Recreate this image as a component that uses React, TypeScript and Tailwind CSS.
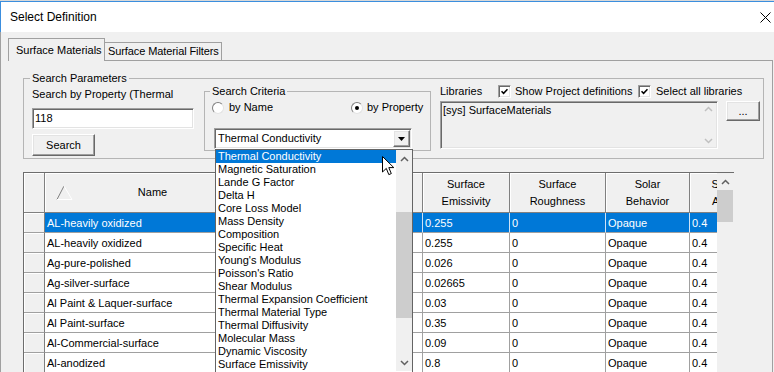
import React from 'react'

const propertyItems: string[] = [
  'Thermal Conductivity',
  'Magnetic Saturation',
  'Lande G Factor',
  'Delta H',
  'Core Loss Model',
  'Mass Density',
  'Composition',
  'Specific Heat',
  "Young's Modulus",
  "Poisson's Ratio",
  'Shear Modulus',
  'Thermal Expansion Coefficient',
  'Thermal Material Type',
  'Thermal Diffusivity',
  'Molecular Mass',
  'Dynamic Viscosity',
  'Surface Emissivity',
]

const materials: [string, string][] = [
  ['AL-heavily oxidized', '0.255'],
  ['AL-heavily oxidized', '0.255'],
  ['Ag-pure-polished', '0.026'],
  ['Ag-silver-surface', '0.02665'],
  ['Al Paint & Laquer-surface', '0.03'],
  ['Al Paint-surface', '0.35'],
  ['Al-Commercial-surface', '0.09'],
  ['Al-anodized', '0.8'],
]

const sunken =
  'border border-t-[#a0a0a0] border-l-[#a0a0a0] border-b-white border-r-white shadow-[inset_1px_1px_0_#696969,inset_-1px_-1px_0_#e3e3e3]'
const raised =
  'border border-t-white border-l-white border-b-[#696969] border-r-[#696969] shadow-[inset_-1px_-1px_0_#a0a0a0,inset_1px_1px_0_#e3e3e3] bg-[#f0f0f0]'

const Chevron: React.FC<{ up?: boolean; color?: string }> = ({ up, color = '#606060' }) => (
  <svg width="9" height="6" viewBox="0 0 9 6">
    <path
      d={up ? 'M1 5 L4.5 1.5 L8 5' : 'M1 1 L4.5 4.5 L8 1'}
      fill="none"
      stroke={color}
      strokeWidth="1.5"
    />
  </svg>
)

const CheckBox: React.FC = () => (
  <span className={`w-[13px] h-[13px] shrink-0 bg-white flex items-center justify-center ${sunken}`}>
    <svg width="7" height="7" viewBox="0 0 7 7">
      <path d="M0.5 3.2 L2.6 5.3 L6.5 1.2" fill="none" stroke="#000" strokeWidth="1.6" />
    </svg>
  </span>
)

const Radio: React.FC<{ checked?: boolean }> = ({ checked }) => (
  <span className="w-[12px] h-[12px] shrink-0 rounded-full bg-white border border-t-[#808080] border-l-[#808080] border-b-[#e3e3e3] border-r-[#e3e3e3] flex items-center justify-center">
    {checked && <span className="w-[4px] h-[4px] rounded-full bg-black" />}
  </span>
)

const SelectDefinition: React.FC = () => {
  return (
    <div className="relative w-[774px] h-[372px] overflow-hidden bg-[#f0f0f0] font-['Liberation_Sans',Arial,sans-serif] text-[11px] text-black">
      <div className="h-px bg-[#d8d8d8]" />
      <div className="h-[31px] bg-white border-t border-l border-[#3b8ede] flex items-center justify-between pl-[9px] pr-[3px]">
        <span className="text-[12px]">Select Definition</span>
        <svg width="11" height="11" viewBox="0 0 11 11">
          <path d="M0.5 0.5 L10.5 10.5 M10.5 0.5 L0.5 10.5" stroke="#000" strokeWidth="1" />
        </svg>
      </div>

      <div className="border-l border-[#a0a0a0] pl-[7px] pr-px pt-[6px] h-[340px]">
        <div className="flex items-end h-[22px] whitespace-nowrap">
          <div className="relative z-10 -mb-px h-[23px] w-[97px] bg-[#f0f0f0] border-t border-l border-r border-[#a0a0a0] pl-[7px] flex items-center">
            Surface Materials
          </div>
          <div className="h-[18px] w-[117px] border-t border-r border-[#a0a0a0] pl-[3px] flex items-center overflow-hidden tracking-[-0.1px]">
            Surface Material Filters
          </div>
        </div>

        <div className="w-[765px] h-[320px] border-t border-r border-[#a0a0a0] pl-[15px] pt-[11px]">
          <fieldset className="w-[741px] h-[87px] border border-[#b5b5b5]">
            <legend className="ml-[6px] px-[2px] leading-[13px]">Search Parameters</legend>
            <div className="flex pl-[8px]">
              <div className="w-[162px] flex flex-col">
                <div className="mt-[3px] leading-[13px] whitespace-nowrap">Search by Property (Thermal</div>
                <div className={`mt-[7px] h-[21px] bg-white pl-[2px] flex items-center ${sunken}`}>118</div>
                <div className={`mt-[5px] h-[22px] w-[63px] flex items-center justify-center ${raised}`}>Search</div>
              </div>

              <fieldset className="ml-[10px] w-[227px] h-[66px] border border-[#b5b5b5]">
                <legend className="ml-[5px] px-[2px] leading-[13px]">Search Criteria</legend>
                <div className="flex items-center h-[13px] mt-[3px] pl-[7px]">
                  <div className="w-[139px] flex items-center gap-[5px]">
                    <Radio />
                    <span>by Name</span>
                  </div>
                  <div className="flex items-center gap-[4px]">
                    <Radio checked />
                    <span>by Property</span>
                  </div>
                </div>
                <div className={`ml-[9px] mt-[14px] w-[198px] h-[21px] bg-white flex items-center justify-between pl-[3px] pr-px ${sunken}`}>
                  <span>Thermal Conductivity</span>
                  <span className={`w-[17px] h-[17px] flex items-center justify-center ${raised}`}>
                    <svg width="7" height="4" viewBox="0 0 7 4">
                      <path d="M0 0 L7 0 L3.5 4 Z" fill="#000" />
                    </svg>
                  </span>
                </div>
              </fieldset>

              <div className="ml-[9px] flex flex-col">
                <div className="flex items-center h-[13px]">
                  <span className="w-[58px]">Libraries</span>
                  <div className="w-[140px] flex items-center gap-[4px]">
                    <CheckBox />
                    <span>Show Project definitions</span>
                  </div>
                  <div className="flex items-center gap-[5px]">
                    <CheckBox />
                    <span>Select all libraries</span>
                  </div>
                </div>
                <div className="flex mt-[3px]">
                  <div className={`w-[278px] h-[48px] flex ${sunken}`}>
                    <div className="flex-1 pl-[2px] pt-[2px] leading-[13px]">[sys] SurfaceMaterials</div>
                    <div className="w-[16px] flex flex-col justify-between items-center py-[4px] mr-px">
                      <Chevron up color="#c0c0c0" />
                      <Chevron color="#c0c0c0" />
                    </div>
                  </div>
                  <div className={`ml-[8px] w-[34px] h-[20px] flex items-center justify-center ${raised}`}>...</div>
                </div>
              </div>
            </div>
          </fieldset>

          <div className="mt-[13px] w-[711px] h-[220px] border-t border-l border-[#6d6d6d] flex">
            <div className="w-[693px] overflow-hidden">
              <div className="flex h-[40px] bg-[#f0f0f0] leading-[17px] text-center">
                <div className="w-[21px] shrink-0 border-r border-b border-[#808080] shadow-[inset_1px_1px_0_#fff]" />
                <div className="relative w-[216px] shrink-0 border-r border-b border-[#808080] shadow-[inset_1px_1px_0_#fff] flex items-center justify-center">
                  <svg className="absolute left-[11px] top-[12px]" width="17" height="16" viewBox="0 0 17 16">
                    <path d="M1 14.5 L8 1" stroke="#808080" strokeWidth="1" fill="none" />
                    <path d="M8 1 L16 14.5 L1 14.5" stroke="#ffffff" strokeWidth="1" fill="none" />
                  </svg>
                  Name
                </div>
                <div className="w-[162px] shrink-0 border-r border-b border-[#808080] shadow-[inset_1px_1px_0_#fff] flex items-center justify-center">
                  Thermal
                  <br />
                  Conductivity
                </div>
                <div className="w-[87px] shrink-0 border-r border-b border-[#808080] shadow-[inset_1px_1px_0_#fff] flex items-center justify-center">
                  Surface
                  <br />
                  Emissivity
                </div>
                <div className="w-[96px] shrink-0 border-r border-b border-[#808080] shadow-[inset_1px_1px_0_#fff] flex items-center justify-center">
                  Surface
                  <br />
                  Roughness
                </div>
                <div className="w-[84px] shrink-0 border-r border-b border-[#808080] shadow-[inset_1px_1px_0_#fff] flex items-center justify-center">
                  Solar
                  <br />
                  Behavior
                </div>
                <div className="w-[107px] shrink-0 border-r border-b border-[#808080] shadow-[inset_1px_1px_0_#fff] flex items-center justify-center whitespace-nowrap">
                  Solar Diffuse
                  <br />
                  Absorptance
                </div>
              </div>

              {materials.map(([name, emissivity], i) => {
                const selected = i === 0
                const cell = selected
                  ? 'bg-[#0078d7] text-white border-r border-b border-r-[#cfe2f5] border-b-[#a0a0a0]'
                  : 'bg-white border-r border-b border-[#a0a0a0]'
                return (
                  <div key={i} className="flex h-[20px] leading-[21px] whitespace-nowrap">
                    <div className="w-[21px] shrink-0 bg-[#f0f0f0] border-r border-r-[#808080] border-b border-b-[#a0a0a0] shadow-[inset_1px_1px_0_#fff]" />
                    <div className={`w-[216px] shrink-0 pl-[2px] ${cell}`}>{name}</div>
                    <div className={`w-[162px] shrink-0 ${cell}`} />
                    <div className={`w-[87px] shrink-0 pl-[2px] ${cell}`}>{emissivity}</div>
                    <div className={`w-[96px] shrink-0 pl-[2px] ${cell}`}>0</div>
                    <div className={`w-[84px] shrink-0 pl-[2px] ${cell}`}>Opaque</div>
                    <div className={`w-[107px] shrink-0 pl-[2px] ${cell}`}>0.4</div>
                  </div>
                )
              })}
            </div>
            <div className="w-[16px] flex flex-col bg-[#f0f0f0]">
              <div className="h-[17px] flex items-center justify-center">
                <Chevron up />
              </div>
              <div className="h-[32px] bg-[#cdcdcd]" />
            </div>
          </div>
        </div>
      </div>

      {/* open combo list */}
      <div className="absolute left-[215px] top-[149px] w-[198px] h-[224px] bg-white border border-[#646464] flex">
        <div className="w-[180px]">
          {propertyItems.map((item, i) => (
            <div
              key={item}
              className={`h-[13px] leading-[13px] pl-[2px] whitespace-nowrap ${
                i === 0 ? 'bg-[#0078d7] text-white' : ''
              }`}
            >
              {item}
            </div>
          ))}
        </div>
        <div className="w-[16px] h-[221px] flex flex-col bg-[#f0f0f0]">
          <div className="h-[17px] flex items-center justify-center">
            <Chevron up />
          </div>
          <div className="h-[45px]" />
          <div className="h-[106px] bg-[#cdcdcd]" />
          <div className="flex-1" />
          <div className="h-[17px] flex items-center justify-center">
            <Chevron />
          </div>
        </div>
      </div>

      {/* mouse pointer */}
      <svg className="absolute left-[382px] top-[156px]" width="13" height="20" viewBox="0 0 13 20">
        <path
          d="M0.5 0.5 L0.5 16 L4.3 12.4 L6.8 18.6 L9.3 17.6 L6.8 11.6 L11.8 11.6 Z"
          fill="#fff"
          stroke="#000"
          strokeWidth="1"
          strokeLinejoin="miter"
        />
      </svg>
    </div>
  )
}

export default SelectDefinition
